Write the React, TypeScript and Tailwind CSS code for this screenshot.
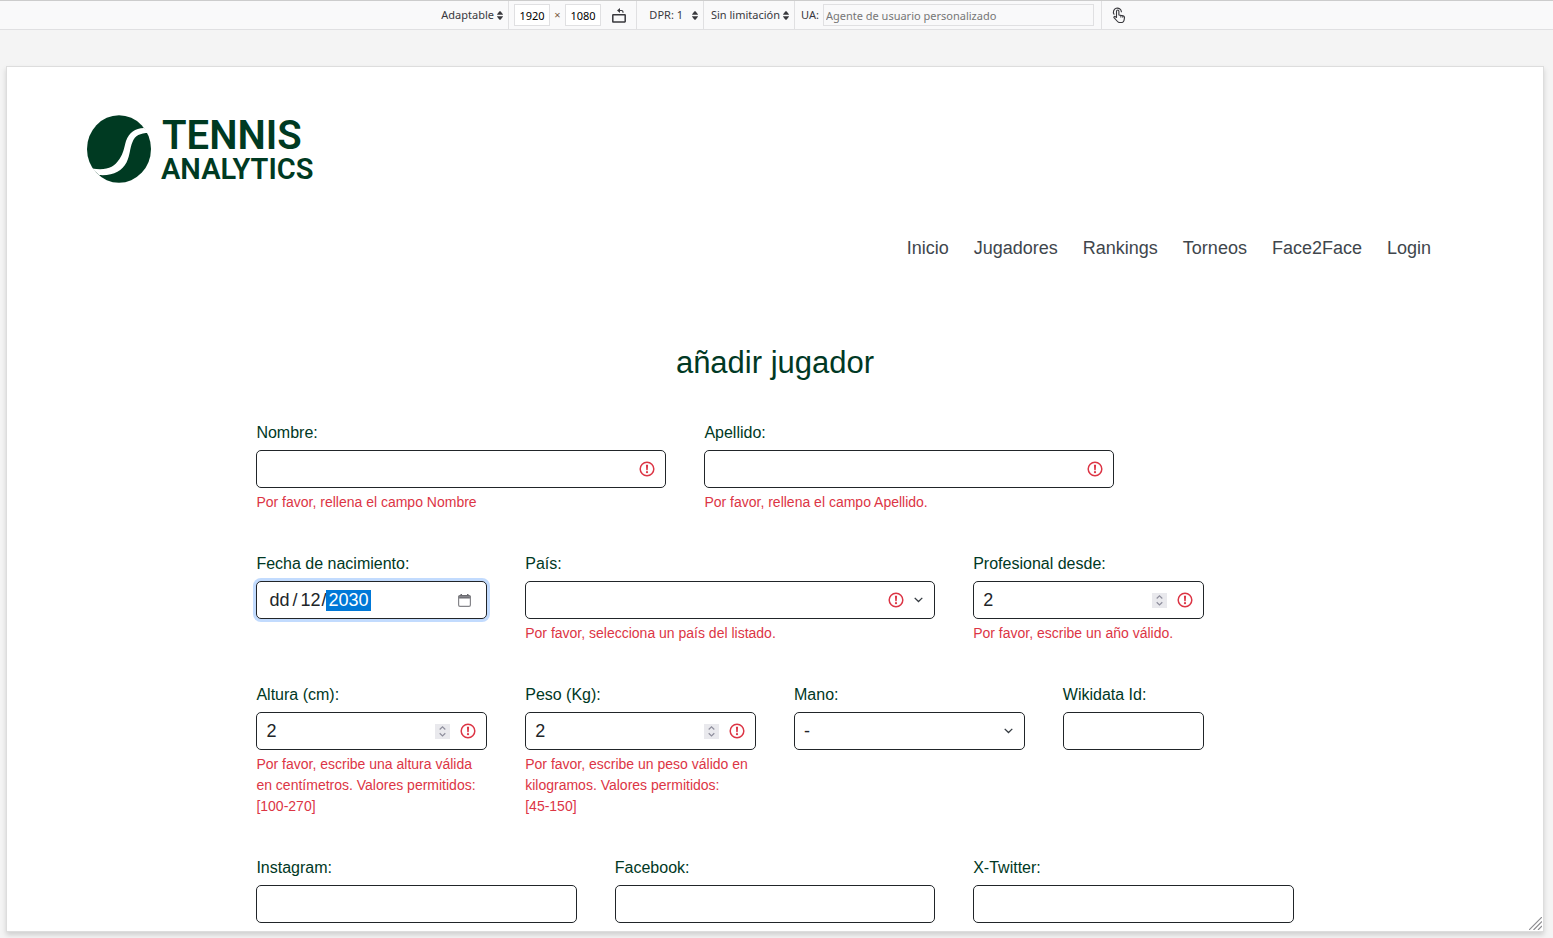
import type { ReactNode } from "react";

function UpDown() {
  return (
    <svg width="6" height="9" viewBox="0 0 6 9" className="shrink-0 fill-[#38383d]" aria-hidden="true">
      <path d="M2.500 0.300H3.500L5.900 3.300V3.800H0.100V3.300Z" />
      <path d="M2.500 8.700H3.500L5.900 5.700V5.200H0.100V5.700Z" />
    </svg>
  );
}

function AlertIcon() {
  return (
    <svg width="16" height="16" viewBox="0 0 16 16" className="shrink-0" aria-hidden="true">
      <circle cx="8" cy="8" r="6.8" fill="none" stroke="#dc3545" strokeWidth="1.5" />
      <path d="M6.900 3.800h2.200L8.700 9.200H7.300Z" fill="#dc3545" />
      <circle cx="8" cy="11.2" r="1.1" fill="#dc3545" />
    </svg>
  );
}

function Chevron() {
  return (
    <svg width="9" height="6" viewBox="0 0 9 6" className="shrink-0" aria-hidden="true">
      <path d="M0.7 0.9 4.5 4.5 8.3 0.9" fill="none" stroke="#343a40" strokeWidth="1.3" />
    </svg>
  );
}

type FieldProps = {
  id: string;
  label: string;
  span: string;
  error?: string;
  range?: string;
  children: ReactNode;
};

function Field({ id, label, span, error, range, children }: FieldProps) {
  return (
    <div className={`${span} px-[19px]`}>
      <label htmlFor={id} className="mb-[5px] block text-base leading-6 text-[#003824]">
        {label}
      </label>
      {children}
      {error && (
        <p className="mt-1 text-sm leading-[21px] text-[#dc3545]">
          {error} {range && <span className="whitespace-nowrap">{range}</span>}
        </p>
      )}
    </div>
  );
}

const box = "flex h-[38px] items-center rounded-[5px] border border-[#212529] bg-white text-lg text-[#212529]";

function TextBox({ id, invalid }: { id: string; invalid?: boolean }) {
  return (
    <div className={`${box} pr-[10px]`}>
      <input id={id} type="text" className="h-full min-w-0 flex-1 bg-transparent pl-[9px] outline-none" />
      {invalid && <AlertIcon />}
    </div>
  );
}

function NumberBox({ id }: { id: string }) {
  return (
    <div className={`${box} gap-[10px] pr-[10px]`}>
      <input
        id={id}
        type="number"
        defaultValue={2}
        className="h-full min-w-0 flex-1 bg-transparent pl-[9px] outline-none [appearance:textfield] [&::-webkit-inner-spin-button]:appearance-none"
      />
      <svg width="15" height="15" viewBox="0 0 15 15" className="shrink-0 bg-[#e9e9ed]" aria-hidden="true">
        <path d="M4.7 5.5 7.5 2.8 10.3 5.5M4.7 9.2 7.5 11.9 10.3 9.2" fill="none" stroke="#8f8f9d" strokeWidth="1.2" />
      </svg>
      <AlertIcon />
    </div>
  );
}

function SelectBox({ id, option, invalid }: { id: string; option: string; invalid?: boolean }) {
  return (
    <div className={`${box} gap-[10px] pr-[11px]`}>
      <select id={id} className="h-full min-w-0 flex-1 appearance-none bg-transparent pl-[9px] outline-none">
        <option>{option}</option>
      </select>
      {invalid && <AlertIcon />}
      <Chevron />
    </div>
  );
}

function DateBox({ id }: { id: string }) {
  return (
    <div className="flex h-[38px] items-center rounded-[5px] border border-[#212529] bg-white pr-[15px] pl-3 text-lg leading-[21px] text-[#212529] ring-3 ring-[#c2dbfe]">
      <input id={id} aria-label="Día" defaultValue="dd" className="w-5 outline-none" />
      <span className="px-[3px]">/</span>
      <input aria-label="Mes" defaultValue="12" className="w-5 outline-none" />
      <span className="pl-px">/</span>
      <input aria-label="Año" defaultValue="2030" className="h-[21px] w-[45px] bg-[#0078d7] px-[2px] text-white outline-none" />
      <button type="button" aria-label="Abrir calendario" className="ml-auto">
        <svg width="13" height="13" viewBox="0 0 13 13" className="block" aria-hidden="true">
          <path d="M2.5 0h1.5v1h5V0h1.5v1H11a2 2 0 0 1 2 2v1.5H0V3a2 2 0 0 1 2-2h.5Z" fill="#6b6b70" />
          <rect x="0.6" y="2.6" width="11.8" height="9.8" rx="1.4" fill="none" stroke="#85858a" strokeWidth="1.2" />
        </svg>
      </button>
    </div>
  );
}

function Toolbar() {
  const cell = "flex h-full shrink-0 items-center border-r border-[#e0e0e2]";
  const number = "h-[22px] border border-[#e0e0e2] bg-white text-center text-black outline-none";
  return (
    <div className="flex h-[30px] shrink-0 items-center justify-center border-t border-b border-t-[#cccccc] border-b-[#e0e0e2] bg-[#f9f9fa] font-['Noto_Sans','Open_Sans',sans-serif] text-[11px] text-[#38383d]">
      <div className={`${cell} w-[84px] justify-end pr-[5px]`}>
        <button type="button" className="flex items-center gap-[3px]">
          Adaptable <UpDown />
        </button>
      </div>
      <div className={`${cell} w-[128px] pl-[5px]`}>
        <input aria-label="Ancho" defaultValue="1920" className={`${number} w-9`} />
        <span className="w-[15px] text-center text-[#7a5a3c]">×</span>
        <input aria-label="Alto" defaultValue="1080" className={`${number} w-9`} />
        <button type="button" aria-label="Girar" className="ml-[11px]">
          <svg width="14" height="15" viewBox="0 0 14 15" className="block" aria-hidden="true">
            <rect x="0.8" y="6.8" width="12.4" height="7.2" rx="0.4" fill="none" stroke="#38383d" strokeWidth="1.5" />
            <path d="M6 2.5h3.5a1.5 1.5 0 0 1 1.5 1.5v.8" fill="none" stroke="#38383d" strokeWidth="1.2" />
            <path d="M8 0 5 2.5 8 5Z" fill="#38383d" />
          </svg>
        </button>
      </div>
      <div className={`${cell} w-[67px] justify-end pr-[5px]`}>
        <button type="button" className="flex items-center gap-[9px]">
          DPR: 1 <UpDown />
        </button>
      </div>
      <div className={`${cell} w-[91px] justify-end pr-[5px]`}>
        <button type="button" className="flex items-center gap-[3px] whitespace-nowrap">
          Sin limitación <UpDown />
        </button>
      </div>
      <div className={`${cell} w-[307px] gap-1 pr-[7px] pl-[6px]`}>
        <label htmlFor="ua">UA:</label>
        <input
          id="ua"
          placeholder="Agente de usuario personalizado"
          className="h-[22px] min-w-0 flex-1 border border-[#e0e0e2] bg-[#f9f9fa] px-[2px] outline-none placeholder:text-[#767676]"
        />
      </div>
      <button type="button" aria-label="Simulación táctil" className="flex w-[26px] shrink-0 pl-[10px]">
        <svg width="14" height="16" viewBox="0 0 14 16" fill="none" stroke="#38383d" strokeLinejoin="round" strokeLinecap="round" aria-hidden="true">
          <path d="M2 7.2a4 4 0 1 1 7.4-2.4" strokeWidth="1.1" />
          <path d="M4.5 10.5V4.2a1.2 1.2 0 0 1 2.4 0V8l4.2.9c1 .2 1.5.9 1.4 1.8l-.4 2.5c-.2 1.4-1 2.3-2.4 2.3H7.5c-.8 0-1.5-.4-2-1L2 10.7c-.4-.9.5-1.6 1.3-1.1Z" strokeWidth="1.1" />
          <path d="M8.8 8.6v1.6M10.8 9v1.4" strokeWidth="0.9" />
        </svg>
      </button>
    </div>
  );
}

function Logo() {
  return (
    <a href="#" aria-label="Tennis Analytics" className="flex w-fit items-start gap-[10px] text-[#003a22]">
      <svg width="64" height="68" viewBox="0 0 64 68" aria-hidden="true">
        <ellipse cx="32" cy="34" rx="32" ry="33.7" fill="currentColor" />
        <path
          d="M57 13C48 13.5 42 17.500 39 26C37 33 36.500 38 32.500 44C27 52.500 19 56 5 53.500L12 60C26 61 35 56 39.500 47.500C43.500 39 42.500 34 45.500 27C48 20.500 53 18 62 18Z"
          fill="white"
        />
      </svg>
      <span className="flex flex-col pt-[3px] font-['Roboto',sans-serif] font-semibold">
        <span className="pl-px text-[40px] leading-9">TENNIS</span>
        <span className="text-[29px] leading-[30px]">ANALYTICS</span>
      </span>
    </a>
  );
}

const links = ["Inicio", "Jugadores", "Rankings", "Torneos", "Face2Face", "Login"];

export default function App() {
  return (
    <div className="flex h-screen flex-col overflow-hidden bg-[#f4f4f4] font-['Liberation_Sans',Arial,sans-serif]">
      <Toolbar />
      <div className="relative mt-9 mr-[9px] mb-[6px] ml-[6px] min-h-0 flex-1 border border-[#dddddd] bg-white shadow-[0_3px_5px_rgba(0,0,0,0.15)]">
        <div className="h-full overflow-hidden">
          <header className="pt-12 pr-28 pl-20">
            <Logo />
            <nav className="mt-[50px] flex justify-end gap-[25px] text-lg leading-7 text-[#40464c]">
              {links.map((link) => (
                <a key={link} href="#">
                  {link}
                </a>
              ))}
            </nav>
          </header>
          <main className="mx-auto w-[70%]">
            <h1 className="mt-[81px] text-center text-[31px] leading-10 text-[#003824]">añadir jugador</h1>
            <form className="mt-[38px] grid grid-cols-12 gap-y-[39px]">
              <Field id="nombre" label="Nombre:" span="col-span-5" error="Por favor, rellena el campo Nombre">
                <TextBox id="nombre" invalid />
              </Field>
              <Field id="apellido" label="Apellido:" span="col-span-5" error="Por favor, rellena el campo Apellido.">
                <TextBox id="apellido" invalid />
              </Field>
              <Field id="fecha" label="Fecha de nacimiento:" span="col-span-3 col-start-1">
                <DateBox id="fecha" />
              </Field>
              <Field id="pais" label="País:" span="col-span-5" error="Por favor, selecciona un país del listado.">
                <SelectBox id="pais" option="" invalid />
              </Field>
              <Field id="profesional" label="Profesional desde:" span="col-span-3" error="Por favor, escribe un año válido.">
                <NumberBox id="profesional" />
              </Field>
              <Field
                id="altura"
                label="Altura (cm):"
                span="col-span-3 col-start-1"
                error="Por favor, escribe una altura válida en centímetros. Valores permitidos:"
                range="[100-270]"
              >
                <NumberBox id="altura" />
              </Field>
              <Field
                id="peso"
                label="Peso (Kg):"
                span="col-span-3"
                error="Por favor, escribe un peso válido en kilogramos. Valores permitidos:"
                range="[45-150]"
              >
                <NumberBox id="peso" />
              </Field>
              <Field id="mano" label="Mano:" span="col-span-3">
                <SelectBox id="mano" option="-" />
              </Field>
              <Field id="wikidata" label="Wikidata Id:" span="col-span-2">
                <TextBox id="wikidata" />
              </Field>
              <Field id="instagram" label="Instagram:" span="col-span-4 col-start-1">
                <TextBox id="instagram" />
              </Field>
              <Field id="facebook" label="Facebook:" span="col-span-4">
                <TextBox id="facebook" />
              </Field>
              <Field id="twitter" label="X-Twitter:" span="col-span-4">
                <TextBox id="twitter" />
              </Field>
            </form>
          </main>
        </div>
        <svg width="13" height="13" viewBox="0 0 13 13" className="absolute right-px bottom-px" aria-hidden="true">
          <path d="M0 13 13 0M4.500 13 13 4.500M9 13 13 9" stroke="#8c8c90" strokeWidth="1.2" fill="none" />
        </svg>
      </div>
    </div>
  );
}
